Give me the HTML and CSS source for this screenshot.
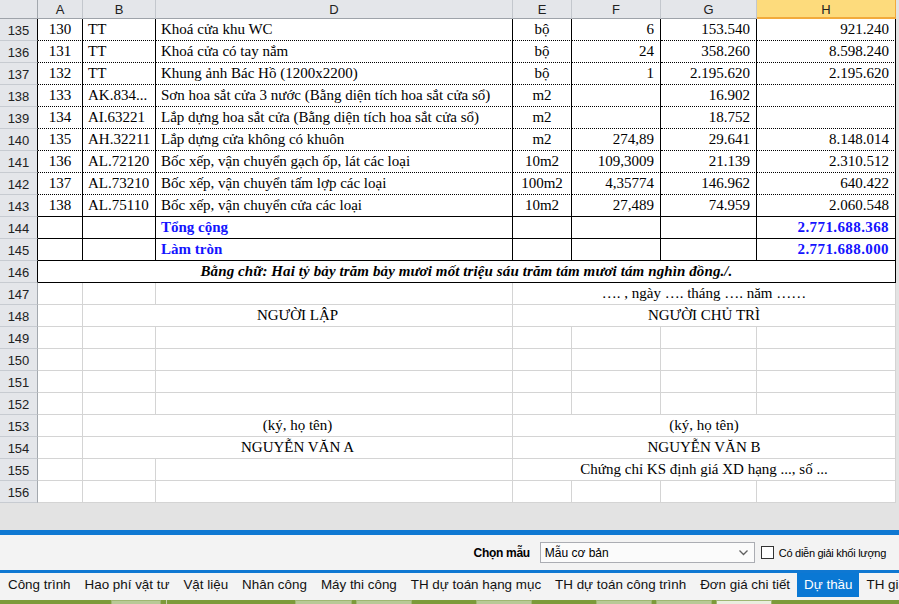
FILE: index.html
```html
<!DOCTYPE html>
<html lang="vi">
<head>
<meta charset="utf-8">
<title>Dự thầu</title>
<link rel="stylesheet" href="styles.css">
</head>
<body>
<div class="app">
  <div class="sheet">
    <table class="grid">
      <colgroup>
        <col class="w-rh"><col class="w-a"><col class="w-b"><col class="w-d"><col class="w-e"><col class="w-f"><col class="w-g"><col class="w-h">
      </colgroup>
      <thead>
        <tr><th class="corner"></th><th>A</th><th>B</th><th>D</th><th>E</th><th>F</th><th>G</th><th class="sel">H</th></tr>
      </thead>
      <tbody>
        <tr class="d"><th class="rh">135</th><td class="c">130</td><td class="l">TT</td><td class="l">Khoá cửa khu WC</td><td class="c">bộ</td><td class="r">6</td><td class="r">153.540</td><td class="r">921.240</td></tr>
        <tr class="d"><th class="rh">136</th><td class="c">131</td><td class="l">TT</td><td class="l">Khoá cửa có tay nắm</td><td class="c">bộ</td><td class="r">24</td><td class="r">358.260</td><td class="r">8.598.240</td></tr>
        <tr class="d"><th class="rh">137</th><td class="c">132</td><td class="l">TT</td><td class="l">Khung ảnh Bác Hồ (1200x2200)</td><td class="c">bộ</td><td class="r">1</td><td class="r">2.195.620</td><td class="r">2.195.620</td></tr>
        <tr class="d"><th class="rh">138</th><td class="c">133</td><td class="l">AK.834...</td><td class="l">Sơn hoa sắt cửa 3 nước (Bằng diện tích hoa sắt cửa sổ)</td><td class="c">m2</td><td class="r"></td><td class="r">16.902</td><td class="r"></td></tr>
        <tr class="d"><th class="rh">139</th><td class="c">134</td><td class="l">AI.63221</td><td class="l">Lắp dựng hoa sắt cửa (Bằng diện tích hoa sắt cửa sổ)</td><td class="c">m2</td><td class="r"></td><td class="r">18.752</td><td class="r"></td></tr>
        <tr class="d"><th class="rh">140</th><td class="c">135</td><td class="l">AH.32211</td><td class="l">Lắp dựng cửa không có khuôn</td><td class="c">m2</td><td class="r">274,89</td><td class="r">29.641</td><td class="r">8.148.014</td></tr>
        <tr class="d"><th class="rh">141</th><td class="c">136</td><td class="l">AL.72120</td><td class="l">Bốc xếp, vận chuyển gạch ốp, lát các loại</td><td class="c">10m2</td><td class="r">109,3009</td><td class="r">21.139</td><td class="r">2.310.512</td></tr>
        <tr class="d"><th class="rh">142</th><td class="c">137</td><td class="l">AL.73210</td><td class="l">Bốc xếp, vận chuyển tấm lợp các loại</td><td class="c">100m2</td><td class="r">4,35774</td><td class="r">146.962</td><td class="r">640.422</td></tr>
        <tr class="d last"><th class="rh">143</th><td class="c">138</td><td class="l">AL.75110</td><td class="l">Bốc xếp, vận chuyển cửa các loại</td><td class="c">10m2</td><td class="r">27,489</td><td class="r">74.959</td><td class="r">2.060.548</td></tr>
        <tr class="s"><th class="rh">144</th><td></td><td></td><td class="l tot">Tổng cộng</td><td></td><td></td><td></td><td class="r tot num">2.771.688.368</td></tr>
        <tr class="s"><th class="rh">145</th><td></td><td></td><td class="l tot">Làm tròn</td><td></td><td></td><td></td><td class="r tot num">2.771.688.000</td></tr>
        <tr class="s"><th class="rh">146</th><td colspan="7" class="c words">Bằng chữ: Hai tỷ bảy trăm bảy mươi mốt triệu sáu trăm tám mươi tám nghìn đồng./.</td></tr>
        <tr><th class="rh">147</th><td></td><td></td><td></td><td colspan="4" class="c">…. , ngày …. tháng …. năm ……</td></tr>
        <tr><th class="rh">148</th><td></td><td colspan="2" class="c">NGƯỜI LẬP</td><td colspan="4" class="c">NGƯỜI CHỦ TRÌ</td></tr>
        <tr><th class="rh">149</th><td></td><td></td><td></td><td></td><td></td><td></td><td></td></tr>
        <tr><th class="rh">150</th><td></td><td></td><td></td><td></td><td></td><td></td><td></td></tr>
        <tr><th class="rh">151</th><td></td><td></td><td></td><td></td><td></td><td></td><td></td></tr>
        <tr><th class="rh">152</th><td></td><td></td><td></td><td></td><td></td><td></td><td></td></tr>
        <tr><th class="rh">153</th><td></td><td colspan="2" class="c">(ký, họ tên)</td><td colspan="4" class="c">(ký, họ tên)</td></tr>
        <tr><th class="rh">154</th><td></td><td colspan="2" class="c">NGUYỄN VĂN A</td><td colspan="4" class="c">NGUYỄN VĂN B</td></tr>
        <tr><th class="rh">155</th><td></td><td></td><td></td><td colspan="4" class="c">Chứng chỉ KS định giá XD hạng ..., số ...</td></tr>
        <tr><th class="rh">156</th><td></td><td></td><td></td><td></td><td></td><td></td><td></td></tr>
      </tbody>
    </table>
  </div>
  <div class="bar-top"></div>
  <div class="panel">
    <span class="lbl">Chọn mẫu</span>
    <div class="select">
      <span>Mẫu cơ bản</span>
      <svg class="chev" width="9" height="6" viewBox="0 0 9 6"><polyline points="0.5,0.5 4.5,4.5 8.5,0.5" fill="none" stroke="#606060" stroke-width="1.3"/></svg>
    </div>
    <span class="check"></span>
    <span class="chk-lbl">Có diễn giải khối lượng</span>
  </div>
  <div class="bar-mid"></div>
  <div class="tabs">
    <span class="tab">Công trình</span>
    <span class="tab">Hao phí vật tư</span>
    <span class="tab">Vật liệu</span>
    <span class="tab">Nhân công</span>
    <span class="tab">Máy thi công</span>
    <span class="tab">TH dự toán hạng mục</span>
    <span class="tab">TH dự toán công trình</span>
    <span class="tab">Đơn giá chi tiết</span>
    <span class="tab active">Dự thầu</span>
    <span class="tab">TH giá trị</span>
  </div>
  <div class="green">
    <span class="gb g1"></span><span class="gl"></span><span class="gb g2"></span><span class="gb g3"></span><span class="gb g4"></span><span class="gb g5"></span><span class="gb g6"></span><span class="gb g7 light"></span>
  </div>
</div>
</body>
</html>
```
FILE: styles.css
```css
* { box-sizing: border-box; }
html, body { margin: 0; padding: 0; }
body {
  width: 899px;
  height: 604px;
  overflow: hidden;
  font-family: "Liberation Sans", Arial, sans-serif;
  background: #f3f3f3;
}
.app { display: flex; flex-direction: column; height: 604px; }

.sheet { height: 530px; background: #e3e3e3; overflow: hidden; flex: none; }

.grid {
  border-collapse: separate;
  border-spacing: 0;
  table-layout: fixed;
  width: 896px;
  background: #fff;
  font-family: "Liberation Serif", "Times New Roman", serif;
  font-size: 15px;
  color: #000;
}
.w-rh { width: 38px; }
.w-a { width: 45px; }
.w-b { width: 73px; }
.w-d { width: 357px; }
.w-e { width: 59px; }
.w-f { width: 89px; }
.w-g { width: 96px; }
.w-h { width: 139px; }

.grid tr { height: 22px; }
.grid thead tr { height: 19px; }
.grid td, .grid th {
  padding: 0;
  border-right: 1px solid #d4d4d4;
  border-bottom: 1px solid #d4d4d4;
  white-space: nowrap;
  overflow: hidden;
  line-height: 17px;
  vertical-align: middle;
}
.grid thead th {
  background: #e4e6ea;
  font-family: "Liberation Sans", Arial, sans-serif;
  font-size: 13px;
  font-weight: normal;
  color: #222;
  border-right: 1px solid #c3c7cd;
  border-bottom: 1px solid #9ea3aa;
  line-height: 15px;
}
.grid thead th.corner { border-right-color: #a3a8ae; }
.grid thead th.sel {
  background: #fddb7c;
  border-right-color: #f2aa3c;
  border-bottom: 1px solid #f2aa3c;
  box-shadow: inset 0 -1px 0 #f2aa3c;
}
.grid th.rh {
  background: #e4e6ea;
  font-family: "Liberation Sans", Arial, sans-serif;
  font-size: 13px;
  font-weight: normal;
  color: #222;
  text-align: center;
  border-right: 1px solid #a3a8ae;
  border-bottom: 1px solid #c7cbd1;
  padding-top: 1px;
}

.c { text-align: center; }
.l { text-align: left; padding-left: 5px !important; }
.r { text-align: right; padding-right: 6px !important; }

.d td { border-right: 1px solid #000; border-bottom: 1px dotted #000; }
.d.last td { border-bottom: 1px solid #000; }
.s td { border-right: 1px solid #000; border-bottom: 1px solid #000; }
.d th.rh, .s th.rh { border-right-color: #000; }

.tot { color: #1414ff; font-weight: bold; }
.num { letter-spacing: 0.4px; }
.words { font-weight: bold; font-style: italic; letter-spacing: 0.1px; }

.bar-top { height: 5px; background: #0f78d2; flex: none; }
.panel {
  height: 35px;
  flex: none;
  background: #f3f3f3;
  display: flex;
  align-items: center;
  justify-content: flex-end;
  padding-right: 13px;
  font-size: 12px;
  color: #000;
}
.lbl { font-weight: bold; font-size: 12px; margin-right: 10px; letter-spacing: -0.3px; }
.select {
  width: 215px;
  height: 21px;
  border: 1px solid #abadb3;
  background: #fbfbfb;
  display: flex;
  align-items: center;
  justify-content: space-between;
  padding: 0 6px 0 4px;
  font-size: 12px;
}
.chev { display: block; }
.check {
  width: 13px;
  height: 13px;
  border: 1px solid #333;
  background: #fff;
  margin-left: 6px;
  margin-right: 5px;
}
.chk-lbl { font-size: 11px; letter-spacing: -0.28px; }

.bar-mid { height: 3px; background: #0f78d2; flex: none; }
.tabs {
  height: 27px;
  flex: none;
  display: flex;
  align-items: flex-start;
  padding-left: 1px;
  background: #f3f3f3;
  overflow: hidden;
  white-space: nowrap;
}
.tab {
  height: 24px;
  line-height: 24px;
  padding: 0 7px;
  font-size: 13.4px;
  color: #111;
  flex: none;
}
.tab.active { background: #0a78d4; color: #fff; }

.green {
  height: 4px;
  flex: none;
  background: #7c9b3a;
  display: flex;
  align-items: stretch;
}
.gb { height: 4px; background: #b7c996; border: 1px solid #9fb672; border-bottom: none; flex: none; }
.gl { width: 1px; background: #c6d3ab; margin-left: 5px; flex: none; }
.g1 { width: 50px; margin-left: 111px; }
.g2 { width: 57px; margin-left: 128px; }
.g3 { width: 56px; margin-left: 4px; }
.g4 { width: 56px; margin-left: 64px; }
.g5 { width: 56px; margin-left: 64px; }
.g6 { width: 56px; margin-left: 4px; }
.g7 { width: 56px; margin-left: 4px; }
.gb.light { background: #e9eedf; }
```
